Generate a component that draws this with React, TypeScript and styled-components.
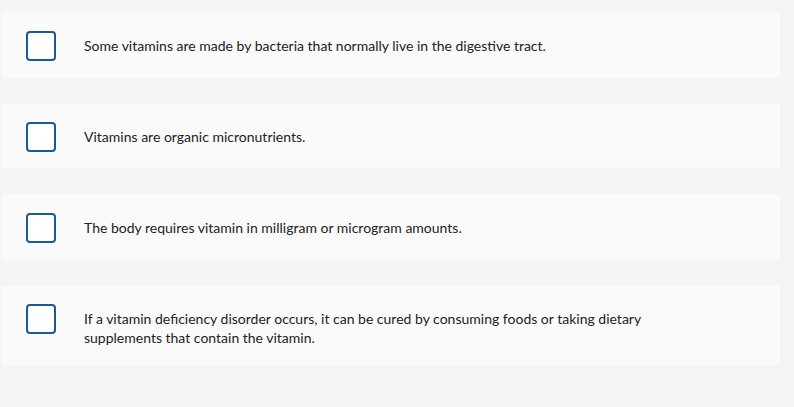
import React from 'react';
import styled, { createGlobalStyle } from 'styled-components';

const GlobalStyle = createGlobalStyle`
  body {
    margin: 0;
    background: #f4f4f4;
    font-family: Lato, "Liberation Sans", sans-serif;
  }
`;

const List = styled.div`
  display: flex;
  flex-direction: column;
  gap: 25px;
  padding: 12px 14px 0 1px;
`;

const Card = styled.label`
  display: flex;
  align-items: flex-start;
  gap: 28px;
  background: #fafafa;
  border-radius: 3px;
  padding: 19px 24px 17px 25px;
`;

const Box = styled.span`
  flex: none;
  width: 30px;
  height: 30px;
  box-sizing: border-box;
  border: 2px solid #1a5896;
  border-radius: 4px;
  background: #ffffff;
`;

const Text = styled.div`
  max-width: 600px;
  padding-top: 5px;
  margin-bottom: 1px;
  font-size: 14px;
  line-height: 19px;
  color: #222222;
`;

const options = [
  'Some vitamins are made by bacteria that normally live in the digestive tract.',
  'Vitamins are organic micronutrients.',
  'The body requires vitamin in milligram or microgram amounts.',
  'If a vitamin deficiency disorder occurs, it can be cured by consuming foods or taking dietary supplements that contain the vitamin.',
];

export default function App() {
  return (
    <>
      <GlobalStyle />
      <List>
        {options.map(option => (
          <Card key={option}>
            <Box />
            <Text>{option}</Text>
          </Card>
        ))}
      </List>
    </>
  );
}
